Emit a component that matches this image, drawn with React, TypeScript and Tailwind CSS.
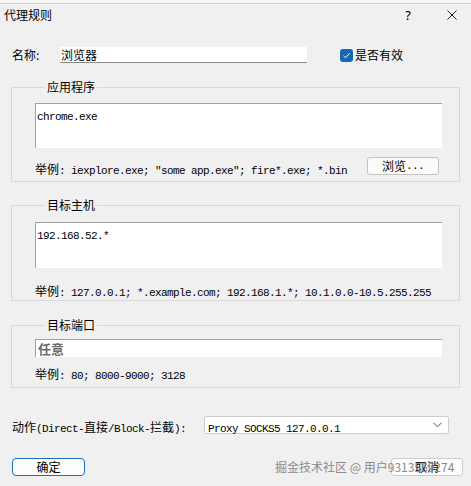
import React from "react";

const CJK_RE = /[\u3000-\u9fff\uff00-\uffef]/;

// split a string into CJK / latin runs so each gets the right face and width
function Mixed({ text }: { text: string }) {
  const runs: { cjk: boolean; s: string }[] = [];
  for (const ch of text) {
    const cjk = CJK_RE.test(ch);
    const last = runs[runs.length - 1];
    if (last && last.cjk === cjk) last.s += ch;
    else runs.push({ cjk, s: ch });
  }
  return (
    <>
      {runs.map((r, i) =>
        r.cjk ? (
          <span key={i} className="font-['Noto_Sans_CJK_SC',sans-serif] text-[12px]">
            {r.s}
          </span>
        ) : (
          <span key={i} className="font-['Liberation_Mono',monospace] text-[11px] tracking-[-0.6px] whitespace-pre">
            {r.s}
          </span>
        )
      )}
    </>
  );
}

function Group({ title, children }: { title: string; children: React.ReactNode }) {
  return (
    <fieldset className="mx-[11px] border border-[#d9d9d9] pl-[23px]">
      <legend className="ml-[10px] px-[2px] text-[12px] leading-[14px] text-black">{title}</legend>
      {children}
    </fieldset>
  );
}

export default function App() {
  return (
    <div className="w-[471px] h-[486px] bg-[#f0f0f0] relative overflow-hidden font-['Noto_Sans_CJK_SC',sans-serif] text-black">
      {/* title bar */}
      <div className="h-[3px] bg-[#f7f7f7]" />
      <div className="h-[27px] border-t border-[#cfcfcf] flex items-center pl-[4px]">
        <span className="text-[12px] leading-[14px] -mt-[4px]">代理规则</span>
        <span className="ml-auto mr-[36px] -mt-[4px] text-[13px] leading-[14px] font-['Noto_Sans',sans-serif]">?</span>
        <svg width="10" height="10" viewBox="0 0 10 10" className="mr-[14px] -mt-[4px]">
          <path d="M0.5 0.5L9.5 9.5M9.5 0.5L0.5 9.5" stroke="#222" strokeWidth="1" />
        </svg>
      </div>

      {/* name row */}
      <div className="mt-[17px] h-[16px] flex items-center">
        <span className="pl-[12px] w-[60px] text-[12px] leading-[14px]">名称:</span>
        <div className="w-[247px] h-[16px] bg-white border-b border-[#8a8a8a] flex items-center pl-[1px]">
          <span className="text-[12px] leading-[14px]">浏览器</span>
        </div>
        <div className="ml-[33px] w-[13px] h-[13px] rounded-[3px] bg-[#1468b8] flex items-center justify-center">
          <svg width="9" height="9" viewBox="0 0 9 9">
            <path d="M1.5 4.8L3.6 6.8L7.6 2.2" fill="none" stroke="white" strokeWidth="1" />
          </svg>
        </div>
        <span className="ml-[2px] text-[12px] leading-[14px]">是否有效</span>
      </div>

      {/* applications */}
      <div className="mt-[17px]">
        <Group title="应用程序">
          <div className="mt-[9px] w-[407px] h-[45px] bg-white border-t border-l border-[#a0a0a0] pl-[1px]">
            <div className="h-[14px] leading-[14px] mt-[2px]">
              <Mixed text="chrome.exe" />
            </div>
          </div>
          <div className="mt-[9px] mb-[6px] h-[18px] w-[407px] flex items-center">
            <div className="h-[14px] leading-[14px] mt-[1px]">
              <Mixed text='举例: iexplore.exe; "some app.exe"; fire*.exe; *.bin' />
            </div>
            <button className="ml-auto mr-[3px] w-[72px] h-[18px] rounded-[3px] border border-[#c4c4c4] bg-[#fbfbfb] flex items-center justify-center leading-[14px]">
              <Mixed text="浏览..." />
            </button>
          </div>
        </Group>
      </div>

      {/* hosts */}
      <div className="mt-[16px]">
        <Group title="目标主机">
          <div className="mt-[10px] w-[407px] h-[46px] bg-white border-t border-l border-[#a0a0a0] pl-[1px]">
            <div className="h-[14px] leading-[14px] mt-[2px]">
              <Mixed text="192.168.52.*" />
            </div>
          </div>
          <div className="mt-[14px] mb-[4px] h-[14px] leading-[14px]">
            <Mixed text="举例: 127.0.0.1; *.example.com; 192.168.1.*; 10.1.0.0-10.5.255.255" />
          </div>
        </Group>
      </div>

      {/* ports */}
      <div className="mt-[17px]">
        <Group title="目标端口">
          <div className="mt-[7px] w-[407px] h-[18px] bg-white border-t border-l border-[#a0a0a0] pl-[2px] flex items-center">
            <span className="text-[13px] leading-[14px] font-bold text-[#6a6a6a]">任意</span>
          </div>
          <div className="mt-[8px] mb-[8px] h-[14px] leading-[14px]">
            <Mixed text="举例: 80; 8000-9000; 3128" />
          </div>
        </Group>
      </div>

      {/* action */}
      <div className="mt-[28px] h-[18px] flex items-center">
        <div className="pl-[12px] w-[204px] h-[14px] leading-[14px]">
          <Mixed text="动作(Direct-直接/Block-拦截):" />
        </div>
        <div className="w-[245px] h-[18px] bg-white border border-[#cdcdcd] rounded-[2px] flex items-center pl-[3px]">
          <div className="h-[14px] leading-[14px]">
            <Mixed text="Proxy SOCKS5 127.0.0.1" />
          </div>
          <svg width="9" height="6" viewBox="0 0 9 6" className="ml-auto mr-[6px]">
            <path d="M0.5 0.8L4.5 4.8L8.5 0.8" fill="none" stroke="#555" strokeWidth="1" />
          </svg>
        </div>
      </div>

      {/* buttons */}
      <div className="mt-[24px] flex">
        <button className="ml-[12px] w-[73px] h-[18px] rounded-[4px] border border-[#1a6fc4] bg-[#fdfdfd] flex items-center justify-center text-[12px] leading-[14px]">
          确定
        </button>
        <button className="ml-auto mr-[8px] w-[72px] h-[18px] rounded-[3px] border border-[#cccccc] bg-[#fdfdfd] flex items-center justify-center text-[12px] leading-[14px]">
          取消
        </button>
      </div>

      {/* watermark */}
      <div className="absolute left-[275px] top-[460px] text-[12px] leading-[14px] text-[#8a8a8a] font-['Noto_Sans_CJK_SC',sans-serif] whitespace-nowrap pointer-events-none">
        掘金技术社区 @ 用户9313569274
      </div>
    </div>
  );
}
